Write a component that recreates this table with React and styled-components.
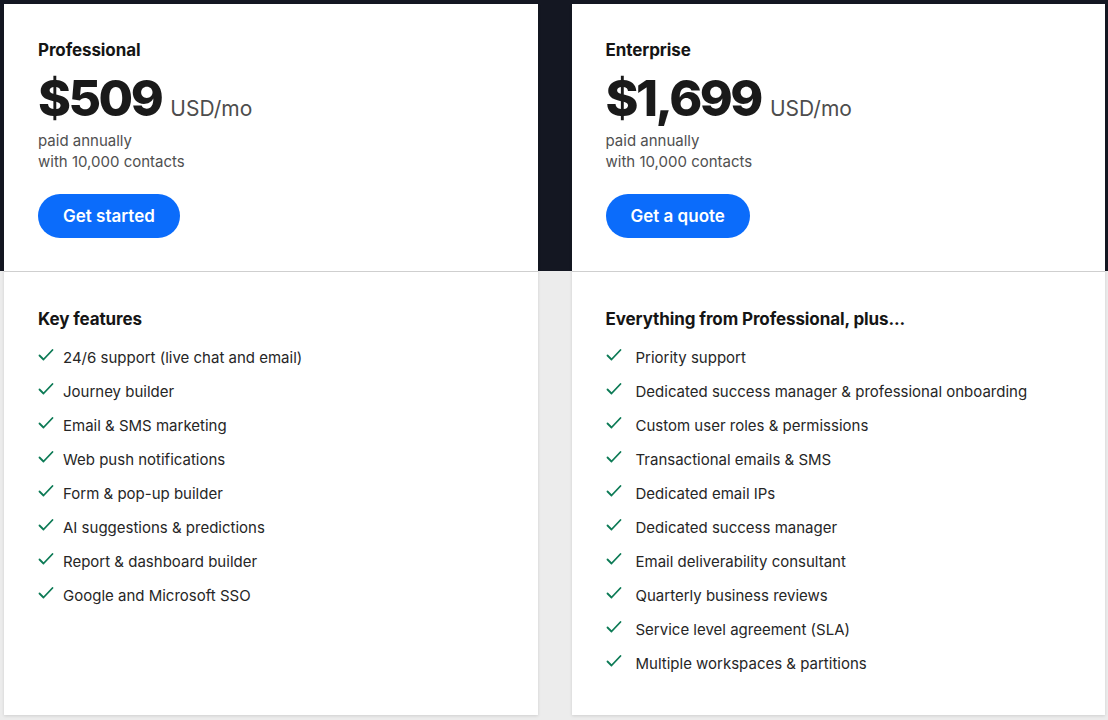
import React from 'react'
import styled, { createGlobalStyle } from 'styled-components'

const GlobalStyle = createGlobalStyle`
  html, body {
    margin: 0;
    padding: 0;
  }
  body {
    font-family: Inter, 'Liberation Sans', sans-serif;
    color: #151515;
  }
`

const Page = styled.div`
  width: 1108px;
  height: 720px;
  box-sizing: border-box;
  padding: 4px 3px 5px 4px;
  background: linear-gradient(#141722 0 271px, #ececec 271px);
  display: flex;
  gap: 34px;
`

const Card = styled.div`
  flex: 1;
  display: flex;
  flex-direction: column;
  background: #fff;
  box-shadow: 0 1px 3px rgba(0, 0, 0, 0.12);
`

const Top = styled.div`
  padding: 34px 34px 33px;
  border-bottom: 1px solid #cfcfcf;
`

const Name = styled.div`
  font-size: 17px;
  font-weight: 700;
  line-height: 24px;
  letter-spacing: -0.1px;
`

const PriceRow = styled.div`
  margin-top: 10px;
  height: 52px;
  display: flex;
  align-items: baseline;
  gap: 9px;
  line-height: 52px;
`

const Amount = styled.span`
  font-size: 50px;
  font-weight: 800;
  letter-spacing: -2.5px;
  color: #1a1a1a;
`

const Unit = styled.span`
  font-size: 21px;
  font-weight: 400;
  color: #4d4d4d;
`

const Note = styled.div`
  margin-top: 6px;
  font-size: 15px;
  line-height: 21px;
  color: #505050;
`

const Button = styled.button`
  display: block;
  margin-top: 22px;
  height: 44px;
  padding: 0 25px;
  border: none;
  border-radius: 22px;
  background: #0b6cfb;
  color: #fff;
  font-family: inherit;
  font-size: 17px;
  font-weight: 600;
  cursor: pointer;
`

const Bottom = styled.div`
  flex: 1;
  padding: 35px 34px 0;
`

const Heading = styled.div`
  font-size: 17px;
  font-weight: 700;
  line-height: 24px;
  letter-spacing: -0.1px;
  margin-bottom: 9px;
`

const List = styled.ul`
  list-style: none;
  margin: 0;
  padding: 0;
`

const Item = styled.li`
  height: 34px;
  display: flex;
  align-items: center;
  gap: ${p => p.$gap}px;
  font-size: 15px;
  color: #262626;
`

const Check = styled.svg`
  flex: none;
  width: 16px;
  height: 14px;
  margin-top: -4px;
`

function CheckIcon() {
  return (
    <Check viewBox="0 0 16 14">
      <polyline points="1.5,7.5 5.5,11.5 14.5,2" fill="none" stroke="#0c7a55" strokeWidth="1.8" strokeLinecap="round" strokeLinejoin="round" />
    </Check>
  )
}

const plans = [
  {
    name: 'Professional',
    price: '$509',
    cta: 'Get started',
    heading: 'Key features',
    gap: 9,
    features: [
      '24/6 support (live chat and email)',
      'Journey builder',
      'Email & SMS marketing',
      'Web push notifications',
      'Form & pop-up builder',
      'AI suggestions & predictions',
      'Report & dashboard builder',
      'Google and Microsoft SSO',
    ],
  },
  {
    name: 'Enterprise',
    price: '$1,699',
    cta: 'Get a quote',
    heading: 'Everything from Professional, plus...',
    gap: 14,
    features: [
      'Priority support',
      'Dedicated success manager & professional onboarding',
      'Custom user roles & permissions',
      'Transactional emails & SMS',
      'Dedicated email IPs',
      'Dedicated success manager',
      'Email deliverability consultant',
      'Quarterly business reviews',
      'Service level agreement (SLA)',
      'Multiple workspaces & partitions',
    ],
  },
]

export default function App() {
  return (
    <>
      <GlobalStyle />
      <Page>
        {plans.map(plan => (
          <Card key={plan.name}>
            <Top>
              <Name>{plan.name}</Name>
              <PriceRow>
                <Amount>{plan.price}</Amount>
                <Unit>USD/mo</Unit>
              </PriceRow>
              <Note>
                paid annually
                <br />
                with 10,000 contacts
              </Note>
              <Button>{plan.cta}</Button>
            </Top>
            <Bottom>
              <Heading>{plan.heading}</Heading>
              <List>
                {plan.features.map(f => (
                  <Item key={f} $gap={plan.gap}>
                    <CheckIcon />
                    {f}
                  </Item>
                ))}
              </List>
            </Bottom>
          </Card>
        ))}
      </Page>
    </>
  )
}
